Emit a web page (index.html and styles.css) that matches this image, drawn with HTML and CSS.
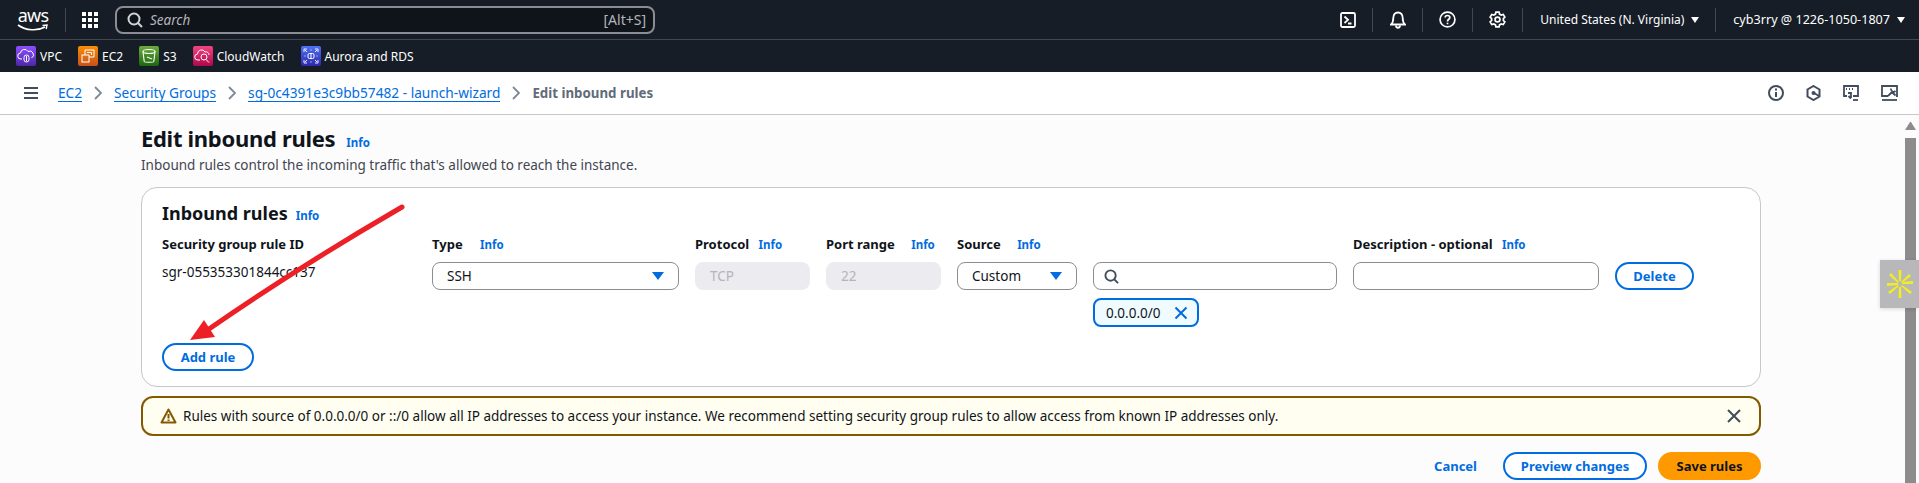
FILE: index.html

```html
<!DOCTYPE html>
<html lang="en">
<head>
<meta charset="utf-8">
<title>Edit inbound rules</title>
<link rel="stylesheet" href="styles.css">
</head>
<body>

<div class="topnav">
    <div class="logo">
        <span class="logo-text">aws</span>
        <svg class="logo-smile" width="32" height="8" viewBox="0 0 32 8" fill="none" stroke="#fff">
            <path d="M1 1c8 6 20 6 27 2" stroke-width="1.600"/>
            <path d="M25.500 1.500l4.500-.5-.8 4" stroke-width="1.400"/>
        </svg>
    </div>
    <div class="logo-sep"></div>
    <svg class="grid-icon" width="16" height="16" viewBox="0 0 16 16" fill="#fff">
        <rect x="0" y="0" width="4" height="4"/><rect x="6" y="0" width="4" height="4"/><rect x="12" y="0" width="4" height="4"/>
        <rect x="0" y="6" width="4" height="4"/><rect x="6" y="6" width="4" height="4"/><rect x="12" y="6" width="4" height="4"/>
        <rect x="0" y="12" width="4" height="4"/><rect x="6" y="12" width="4" height="4"/><rect x="12" y="12" width="4" height="4"/>
    </svg>
    <div class="search">
        <svg width="16" height="16" viewBox="0 0 16 16" fill="none" stroke="#d1d5db" stroke-width="2"><circle cx="7" cy="7" r="5.500"/><path d="M11 11l4 4"/></svg>
        <span class="search-text">Search</span>
        <span class="search-key">[Alt+S]</span>
    </div>
    <div class="nav-right">
        <div class="nav-icon">
            <svg width="16" height="16" viewBox="0 0 16 16" fill="none" stroke="#fff" stroke-width="1.800"><rect x="1" y="1" width="14" height="14" rx="1.500"/><path d="M4.500 4.500L8 7.800 4.500 11M8 11.500h3.500"/></svg>
        </div>
        <div class="nav-icon">
            <svg width="16" height="18" viewBox="0 0 16 18" fill="none" stroke="#fff" stroke-width="1.800"><path d="M1 13.500h14c-1.800-1.500-2.300-3-2.300-6.500C12.700 3.500 10.800 1.500 8 1.500S3.300 3.500 3.300 7c0 3.500-.5 5-2.300 6.500z"/><path d="M6 14.500c0 3 4 3 4 0"/></svg>
        </div>
        <div class="nav-icon">
            <svg width="17" height="17" viewBox="0 0 16 16" fill="none" stroke="#fff" stroke-width="1.600"><circle cx="8" cy="8" r="7"/><path d="M5.800 6.200C5.800 3.600 10.200 3.600 10.200 6.200 10.200 7.800 8 7.800 8 9.800"/><path d="M8 11v1.500"/></svg>
        </div>
        <div class="nav-icon">
            <svg width="17" height="17" viewBox="0 0 16 16" fill="none" stroke="#fff" stroke-width="1.600"><circle cx="8" cy="8" r="2.300"/><path d="M6.500 1h3l.4 1.900 1.600.9 1.900-.6 1.500 2.600-1.400 1.300v1.800l1.400 1.300-1.500 2.600-1.900-.6-1.600.9-.4 1.900h-3l-.4-1.900-1.600-.9-1.900.6L1.100 10.200l1.400-1.300V7.100L1.100 5.800l1.500-2.600 1.900.6 1.600-.9z"/></svg>
        </div>
        <div class="nav-menu region">United States (N. Virginia)<span class="caret"></span></div>
        <div class="nav-menu account">cyb3rry @ 1226-1050-1807<span class="caret"></span></div>
    </div>
</div>

<div class="servicebar">
    <div class="service">
        <svg class="svc-icon violet" viewBox="0 0 20 20" fill="none" stroke="#fff" stroke-width="1"><path d="M6 13H5a3 3 0 0 1-.5-6 4 4 0 0 1 7.500-1.500A3.500 3.500 0 0 1 15.500 12"/><rect x="8" y="9" width="5" height="7" rx="2.500"/><path d="M10.500 10v5"/></svg>
        <span>VPC</span>
    </div>
    <div class="service">
        <svg class="svc-icon orange" viewBox="0 0 20 20" fill="none" stroke="#fff" stroke-width="1"><rect x="4" y="9" width="7" height="7"/><path d="M7 9V4h9v7h-5"/><path d="M9 6.500h4.500V9"/></svg>
        <span>EC2</span>
    </div>
    <div class="service">
        <svg class="svc-icon green" viewBox="0 0 20 20" fill="none" stroke="#fff" stroke-width="1.100"><ellipse cx="10" cy="5.500" rx="6" ry="2"/><path d="M4 5.500l1.200 10c.2 1 9.400 1 9.600 0l1.200-10"/><path d="M8 11l5 2"/></svg>
        <span>S3</span>
    </div>
    <div class="service">
        <svg class="svc-icon pink" viewBox="0 0 20 20" fill="none" stroke="#fff" stroke-width="1"><path d="M7 14H5a3 3 0 0 1-.5-6 4 4 0 0 1 7.500-2 3 3 0 0 1 4 3"/><circle cx="11" cy="11" r="3"/><path d="M13 13.500l3 3"/></svg>
        <span>CloudWatch</span>
    </div>
    <div class="service">
        <svg class="svc-icon indigo" viewBox="0 0 20 20" fill="none" stroke="#fff" stroke-width="1"><rect x="7" y="7.500" width="6" height="5" rx="1.500"/><path d="M10 7.500v5"/><path d="M3 6V3h3M14 3h3v3M17 14v3h-3M6 17H3v-3M4 4l2 2M16 4l-2 2M16 16l-2-2M4 16l2-2" stroke-width=".9"/><path d="M3.500 10h1M15.500 10h1M10 3.500v1M10 15.500v1"/></svg>
        <span>Aurora and RDS</span>
    </div>
</div>

<div class="crumbbar">
    <svg class="hamburger" width="14" height="12" viewBox="0 0 14 12" fill="#414d5c"><rect y="0" width="14" height="2"/><rect y="5" width="14" height="2"/><rect y="10" width="14" height="2"/></svg>
    <a class="crumb crumb-ec2">EC2</a>
    <svg class="chev" width="8" height="14" viewBox="0 0 8 14" fill="none" stroke="#7d8998" stroke-width="1.800"><path d="M1 1l6 6-6 6"/></svg>
    <a class="crumb">Security Groups</a>
    <svg class="chev" width="8" height="14" viewBox="0 0 8 14" fill="none" stroke="#7d8998" stroke-width="1.800"><path d="M1 1l6 6-6 6"/></svg>
    <a class="crumb">sg-0c4391e3c9bb57482 - launch-wizard</a>
    <svg class="chev" width="8" height="14" viewBox="0 0 8 14" fill="none" stroke="#7d8998" stroke-width="1.800"><path d="M1 1l6 6-6 6"/></svg>
    <span class="crumb-current">Edit inbound rules</span>
    <div class="crumb-tools">
        <svg width="16" height="16" viewBox="0 0 16 16" fill="none" stroke="#414d5c" stroke-width="2"><circle cx="8" cy="8" r="7"/><path d="M8 7v5M8 3.500v2"/></svg>
        <svg width="15" height="16" viewBox="0 0 15 16" fill="none" stroke="#414d5c" stroke-width="2"><path d="M7.500 1l6 3.500v7l-6 3.500-6-3.500v-7z"/><circle cx="7.500" cy="8" r="2" fill="#414d5c" stroke="none"/><path d="M8 8l5 3"/></svg>
        <svg width="16" height="16" viewBox="0 0 16 16" fill="none" stroke="#414d5c" stroke-width="1.800"><path d="M4 11H1V1h14v10h-5"/><path d="M3 4h1M6 4h1M9 4h1" stroke-width="2"/><path d="M5 8h3v5M5.500 11L8 13.500"/><path d="M10 15h5"/></svg>
        <svg width="17" height="16" viewBox="0 0 17 16" fill="none" stroke="#414d5c" stroke-width="1.800"><path d="M7 11H1V1h15v10h-1"/><path d="M1 15h15"/><path d="M7 11l5-5M10 3.500c-.5 2.500 2.500 4.500 4.500 2.500M11 7l3.500 3.500"/></svg>
    </div>
</div>

<div class="page">
    <div class="content">
        <div class="title-row">
            <h1>Edit inbound rules</h1>
            <a class="info">Info</a>
        </div>
        <p class="subtitle">Inbound rules control the incoming traffic that's allowed to reach the instance.</p>

        <div class="card">
            <div class="card-title">
                <h2>Inbound rules</h2>
                <a class="info">Info</a>
            </div>
            <div class="rules">
                <div class="label">Security group rule ID</div>
                <div class="label">Type <a class="info info-far">Info</a></div>
                <div class="label">Protocol <a class="info">Info</a></div>
                <div class="label">Port range <a class="info info-mid">Info</a></div>
                <div class="label">Source <a class="info info-mid">Info</a></div>
                <div></div>
                <div class="label">Description - optional <a class="info">Info</a></div>
                <div></div>

                <div class="rule-id">sgr-055353301844cc137</div>
                <div class="select">SSH<span class="select-caret"></span></div>
                <div class="field disabled">TCP</div>
                <div class="field disabled">22</div>
                <div class="select">Custom<span class="select-caret"></span></div>
                <div class="source-col">
                    <div class="field">
                        <svg width="15" height="15" viewBox="0 0 16 16" fill="none" stroke="#414d5c" stroke-width="2"><circle cx="7" cy="7" r="5.500"/><path d="M11 11l4 4"/></svg>
                    </div>
                    <div class="chip">0.0.0.0/0
                        <svg width="14" height="14" viewBox="0 0 14 14" fill="none" stroke="#006ce0" stroke-width="2"><path d="M1.500 1.500l11 11M12.500 1.500l-11 11"/></svg>
                    </div>
                </div>
                <div class="field"></div>
                <button class="btn">Delete</button>
            </div>
            <button class="btn add-rule">Add rule</button>
        </div>

        <div class="warning">
            <svg width="17" height="16" viewBox="0 0 17 16" fill="none" stroke="#855900" stroke-width="2"><path d="M8.500 1.500L1.500 14.500h14z" stroke-linejoin="round"/><path d="M8.500 6v4.500M8.500 11.500v1.500"/></svg>
            <span class="warning-text">Rules with source of 0.0.0.0/0 or ::/0 allow all IP addresses to access your instance. We recommend setting security group rules to allow access from known IP addresses only.</span>
            <svg class="warning-close" width="14" height="14" viewBox="0 0 14 14" fill="none" stroke="#414d5c" stroke-width="2"><path d="M1 1l12 12M13 1L1 13"/></svg>
        </div>

        <div class="actions">
            <a class="cancel">Cancel</a>
            <button class="btn preview">Preview changes</button>
            <button class="btn primary">Save rules</button>
        </div>
    </div>
    <div class="scrollbar">
        <div class="scroll-up"></div>
        <div class="scroll-thumb"></div>
    </div>
</div>

<!-- annotation drawn on top of the screenshot -->
<svg class="arrow" width="240" height="150" viewBox="0 0 240 150">
    <path d="M230 5Q125 66 37 127" fill="none" stroke="#ee2027" stroke-width="5" stroke-linecap="round"/>
    <path d="M18 138L32 118 43 135z" fill="#ee2027"/>
</svg>

<div class="widget">
    <svg width="26" height="28" viewBox="0 0 26 28" fill="#f2ee1c">
        <path d="M11.500 0l3 0-.5 11h-2zM11.500 28l3 0-.5-11h-2zM2 5l2-2 8 9-1 1zM24 6l-2-2-8 8 1 1zM0 13l0 3 11-1v-2zM26 11l0 3-11 0v-2zM3 24l-2-2 10-7 1 1zM23 24l2-2-10-7-1 1z"/>
    </svg>
</div>

</body>
</html>
```

FILE: styles.css

```css
* {
    box-sizing: border-box;
}
html, body {
    margin: 0;
    height: 483px;
    overflow: hidden;
}
body {
    font-family: "Noto Sans", "Liberation Sans", sans-serif;
    font-size: 13.5px;
    color: #0f141a;
    background-color: #fcfcfd;
    position: relative;
}
a {
    color: #006ce0;
}

/* top bar */
.topnav {
    height: 40px;
    background-color: #161d26;
    border-bottom: 1px solid #424650;
    display: flex;
    align-items: center;
    padding-left: 17px;
    color: #fff;
}
.logo {
    flex: none;
    width: 32px;
    display: flex;
    flex-direction: column;
    align-items: center;
}
.logo-text {
    font-size: 18px;
    letter-spacing: -0.8px;
    line-height: 15px;
}
.logo-smile {
    display: block;
    margin-top: 1px;
}
.logo-sep {
    width: 1px;
    height: 24px;
    background-color: #424650;
    margin: 0 16px 0 16px;
}
.grid-icon {
    flex: none;
}
.search {
    margin-left: 17px;
    width: 540px;
    height: 28px;
    border: 2px solid #8c8c94;
    border-radius: 8px;
    background-color: #0f141a;
    display: flex;
    align-items: center;
    padding: 0 7px 0 10px;
    color: #b4b4bb;
}
.search-text {
    font-style: italic;
    margin-left: 7px;
    flex: 1;
}
.search-key {
    font-size: 14px;
}
.nav-right {
    margin-left: auto;
    display: flex;
    align-items: center;
    height: 100%;
}
.nav-icon {
    width: 50px;
    height: 24px;
    border-right: 1px solid #424650;
    display: flex;
    align-items: center;
    justify-content: center;
}
.nav-menu {
    font-size: 12px;
    display: flex;
    align-items: center;
    height: 24px;
}
.region {
    padding: 0 16px 0 17px;
    border-right: 1px solid #424650;
}
.account {
    font-size: 12.6px;
    padding: 0 14px 0 17px;
}
.caret {
    width: 0;
    height: 0;
    border-left: 4px solid transparent;
    border-right: 4px solid transparent;
    border-top: 6px solid #fff;
    margin-left: 7px;
}

/* favourites */
.servicebar {
    height: 32px;
    background-color: #161d26;
    display: flex;
    align-items: center;
    padding-left: 16px;
    color: #fff;
    font-size: 12px;
    gap: 16px;
}
.service {
    display: flex;
    align-items: center;
    gap: 4px;
}
.svc-icon {
    width: 20px;
    height: 20px;
    border-radius: 2px;
}
.violet { background: linear-gradient(#8c4fff, #4d27a8); }
.orange { background: linear-gradient(#f78e04, #c8511b); }
.green { background: linear-gradient(#6cae3e, #1b660f); }
.pink { background: linear-gradient(#f34482, #b0084d); }
.indigo { background: linear-gradient(#4d72f3, #2e27ad); }

/* breadcrumbs */
.crumbbar {
    height: 43px;
    background-color: #fff;
    border-bottom: 1px solid #c6c6cd;
    display: flex;
    align-items: center;
    padding-left: 24px;
    padding-right: 21px;
    font-size: 13.7px;
}
.hamburger {
    margin-right: 20px;
}
.crumb {
    border-bottom: 1px solid #006ce0;
    line-height: 16px;
}
.chev {
    margin: 0 12px;
}
.crumb-current {
    font-size: 13.3px;
    font-weight: 700;
    color: #5f6b7a;
}
.crumb-tools {
    margin-left: auto;
    display: flex;
    align-items: center;
    gap: 22px;
}

/* page */
.page {
    display: flex;
    height: 368px;
}
.content {
    flex: 1;
    padding: 7px 144px 0 141px;
}
.title-row {
    display: flex;
    align-items: baseline;
    gap: 11px;
    height: 32px;
}
h1 {
    margin: 0;
    font-size: 22px;
    letter-spacing: -0.3px;
    line-height: 32px;
    font-weight: 700;
}
.info {
    font-size: 11.5px;
    font-weight: 700;
    color: #006ce0;
}
.subtitle {
    margin: 2px 0 0 0;
    line-height: 18px;
    color: #424650;
}
.card {
    margin-top: 13px;
    height: 200px;
    background-color: #fff;
    border: 1px solid #c6c6cd;
    border-radius: 16px;
    padding: 13px 20px;
}
.card-title {
    display: flex;
    align-items: baseline;
    gap: 8px;
    height: 24px;
}
h2 {
    margin: 0;
    font-size: 18px;
    line-height: 24px;
    font-weight: 700;
}
.rules {
    margin-top: 9px;
    display: grid;
    grid-template-columns: 254px 247px 115px 115px 120px 244px 246px 79px;
    grid-template-rows: 22px auto;
    column-gap: 16px;
    row-gap: 6px;
}
.label {
    font-weight: 700;
    font-size: 13px;
    line-height: 20px;
    white-space: nowrap;
}
.label .info {
    margin-left: 6px;
}
.label .info-far {
    margin-left: 14px;
}
.label .info-mid {
    margin-left: 13px;
}
.rule-id {
    line-height: 24px;
    margin-top: -2px;
}
.select, .field {
    height: 28px;
    border-radius: 8px;
    border: 1px solid #8c8c94;
    background-color: #fff;
    display: flex;
    align-items: center;
    padding: 0 14px;
}
.select-caret {
    margin-left: auto;
    width: 0;
    height: 0;
    border-left: 6px solid transparent;
    border-right: 6px solid transparent;
    border-top: 8px solid #006ce0;
}
.field.disabled {
    background-color: #ebebf0;
    border-color: #ebebf0;
    color: #b4b4bb;
}
.field svg {
    margin-left: -4px;
}
.source-col {
    display: flex;
    flex-direction: column;
    align-items: flex-start;
    gap: 8px;
}
.source-col .field {
    width: 100%;
}
.chip {
    height: 29px;
    width: 106px;
    border: 2px solid #006ce0;
    border-radius: 8px;
    background-color: #f0fbff;
    display: flex;
    align-items: center;
    justify-content: space-between;
    padding: 0 9px 0 11px;
}
.btn {
    font-family: inherit;
    font-size: 13px;
    font-weight: 700;
    color: #006ce0;
    height: 28px;
    background-color: #fff;
    border: 2px solid #006ce0;
    border-radius: 20px;
    padding: 0;
    white-space: nowrap;
}
.add-rule {
    display: block;
    margin-top: 16px;
    width: 92px;
}

/* warning flash */
.warning {
    margin-top: 9px;
    height: 40px;
    background-color: #fffef0;
    border: 2px solid #855900;
    border-radius: 12px;
    display: flex;
    align-items: center;
    padding: 0 18px 0 17px;
    gap: 6px;
}
.warning-text {
    flex: 1;
    white-space: nowrap;
}

/* footer buttons */
.actions {
    margin-top: 16px;
    display: flex;
    justify-content: flex-end;
    align-items: center;
    gap: 11px;
}
.cancel {
    font-size: 13px;
    font-weight: 700;
    margin-right: 15px;
}
.preview {
    width: 144px;
}
.actions .primary {
    width: 103px;
    background-color: #ff9900;
    border-color: #ff9900;
    color: #0f141a;
}

/* scrollbar */
.scrollbar {
    flex: none;
    width: 14px;
}
.scroll-up {
    margin: 7px 0 0 0;
    width: 11px;
    height: 0;
    border-left: 5.500px solid transparent;
    border-right: 5.500px solid transparent;
    border-bottom: 8px solid #8c8c8c;
}
.scroll-thumb {
    margin-top: 8px;
    width: 11px;
    height: 345px;
    background-color: #8c8c8c;
}

/* overlays */
.arrow {
    position: absolute;
    left: 172px;
    top: 202px;
}
.widget {
    position: absolute;
    right: 0;
    top: 260px;
    width: 39px;
    height: 48px;
    background-color: #b8b8bb;
    box-shadow: 0 1px 4px rgba(0, 0, 0, 0.15);
    display: flex;
    align-items: center;
    justify-content: center;
}
```
